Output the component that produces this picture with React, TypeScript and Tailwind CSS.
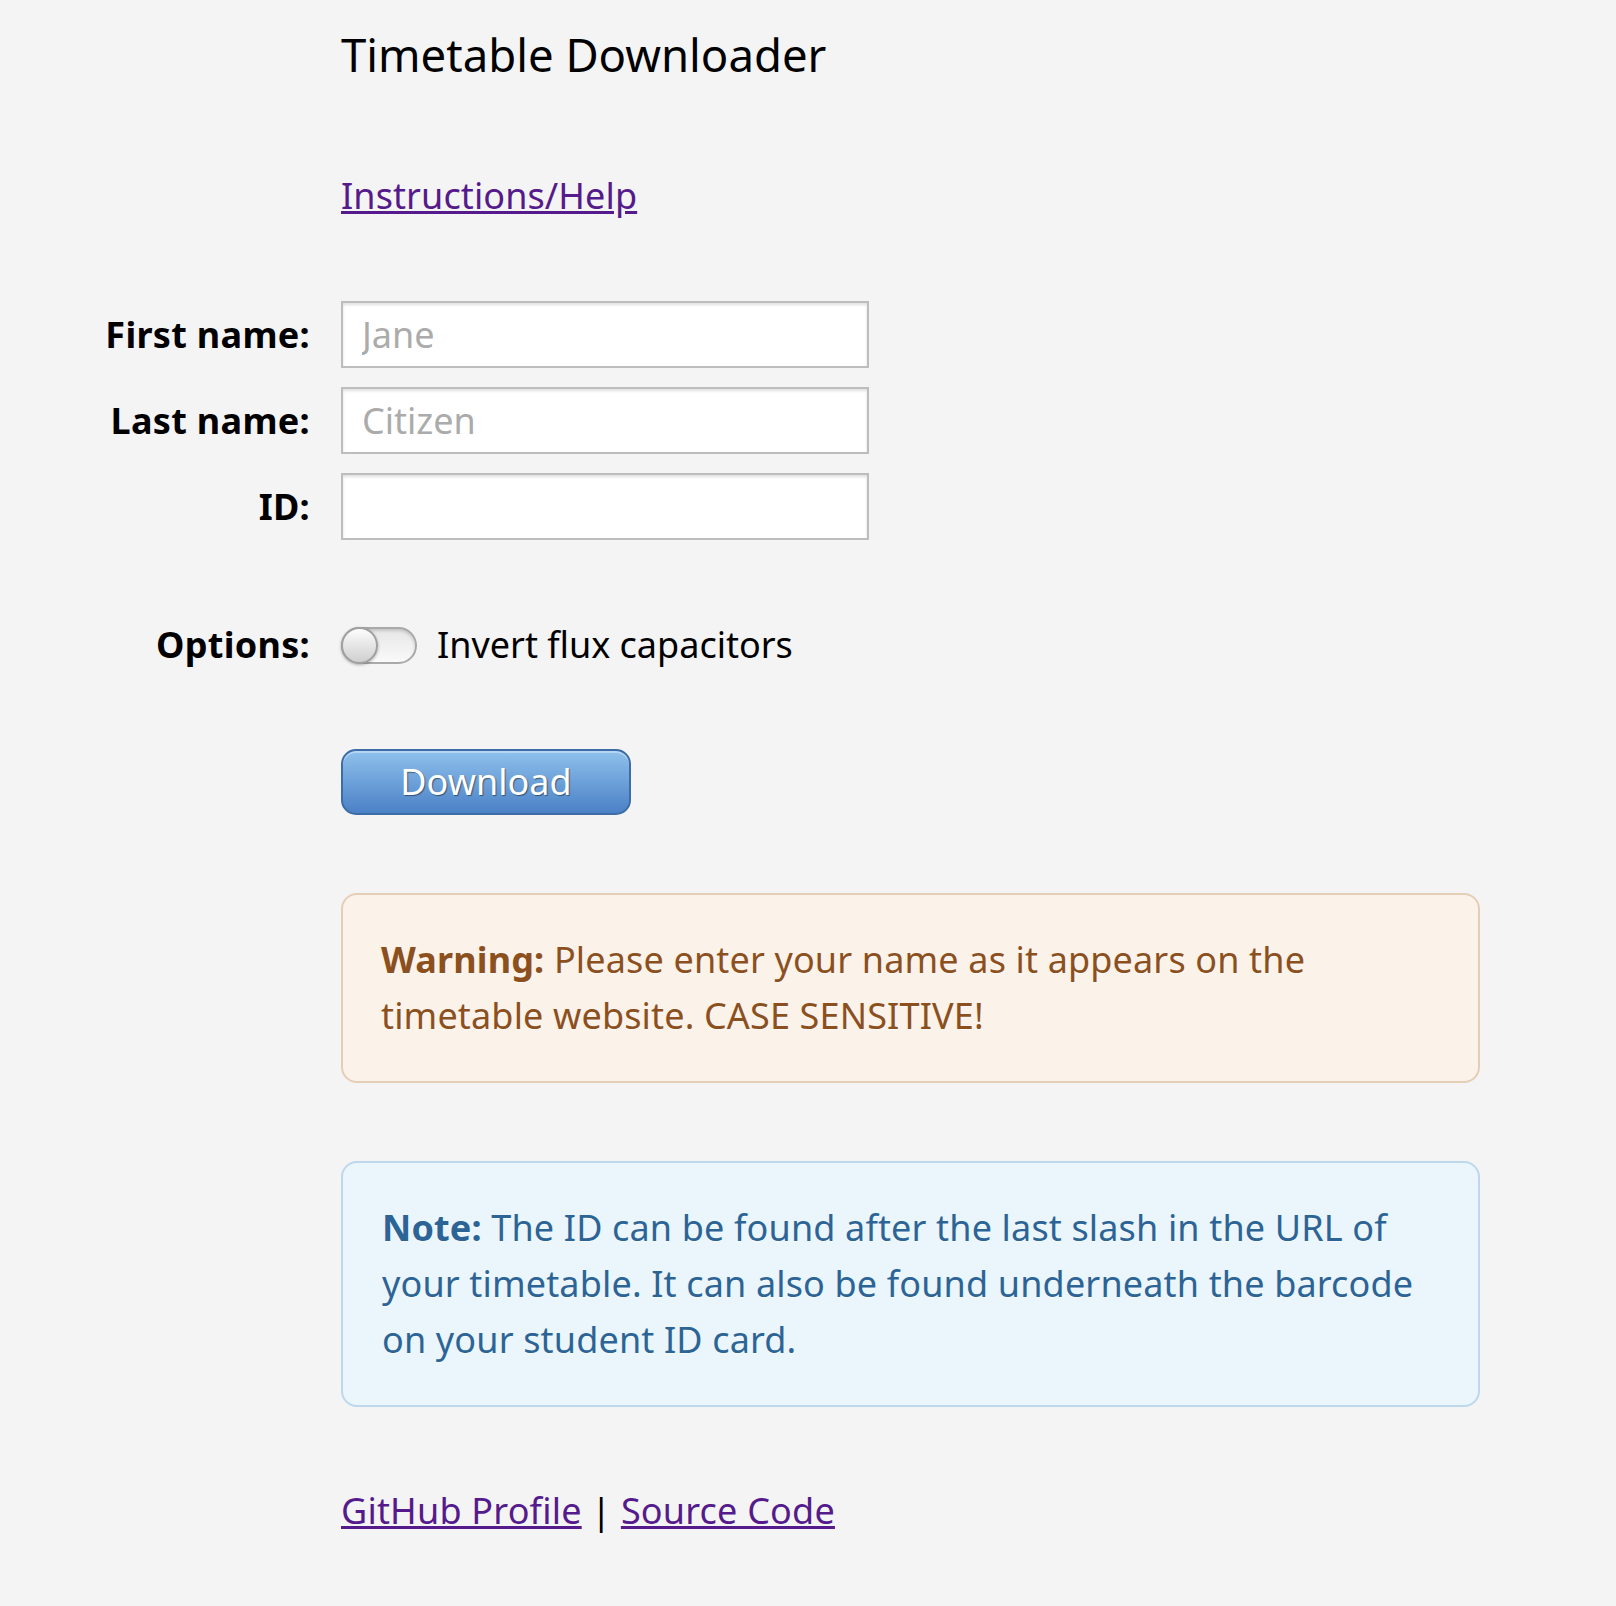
import React, { useState } from "react";

const fields = [
  { label: "First name:", placeholder: "Jane" },
  { label: "Last name:", placeholder: "Citizen" },
  { label: "ID:", placeholder: "" },
];

export default function App() {
  const [invert, setInvert] = useState(false);

  return (
    <div className="min-h-screen bg-[#f4f4f4] font-['Noto_Sans','Open_Sans',sans-serif] text-black pb-[60px]">
      <div className="grid grid-cols-[310px_1139px] gap-x-[31px]">
        {/* Header */}
        <h1 className="col-start-2 mt-[30px] text-[45.5px] leading-[48px] font-normal">
          Timetable Downloader
        </h1>
        <p className="col-start-2 mt-[90px] text-[36px] leading-[56px] tracking-[0.1px]">
          <a href="#" className="text-[#551a8b] underline">
            Instructions/Help
          </a>
        </p>

        {/* Fields */}
        <div className="col-span-2 mt-[77px] grid grid-cols-[310px_528px] gap-x-[31px] gap-y-[19px]">
          {fields.map((f) => (
            <React.Fragment key={f.label}>
              <label className="flex items-center justify-end text-[36px] leading-[56px] font-bold tracking-[0.3px]">
                {f.label}
              </label>
              <input
                type="text"
                placeholder={f.placeholder}
                className="h-[67px] w-[528px] bg-white border-2 border-[#bdbdbd] shadow-[inset_0_2px_3px_rgba(0,0,0,0.12)] px-[19px] text-[36px] outline-none placeholder:text-[#ababab]"
              />
            </React.Fragment>
          ))}
        </div>

        {/* Options */}
        <div className="mt-[77px] flex items-center justify-end text-[36px] leading-[56px] font-bold tracking-[0.3px]">
          Options:
        </div>
        <div className="mt-[77px] flex items-center gap-[20px] text-[36px] leading-[56px]">
          <button
            type="button"
            onClick={() => setInvert(!invert)}
            className={
              "relative w-[76px] h-[37px] rounded-full border-2 border-[#a9a9a9] shadow-[inset_0_2px_3px_rgba(0,0,0,0.15)] " +
              (invert
                ? "bg-gradient-to-b from-[#4d84c9] to-[#8cbde9]"
                : "bg-gradient-to-b from-[#e6e6e6] to-[#fafafa]")
            }
          >
            <span
              className={
                "absolute top-[-2px] w-[37px] h-[37px] rounded-full border-2 border-[#a0a0a0] bg-gradient-to-b from-[#fdfdfd] to-[#cfcfcf] shadow-[0_1px_3px_rgba(0,0,0,0.3)] " +
                (invert ? "right-[-2px]" : "left-[-2px]")
              }
            />
          </button>
          <span>Invert flux capacitors</span>
        </div>

        {/* Download */}
        <div className="col-start-2 mt-[76px]">
          <button
            type="button"
            className="w-[290px] h-[66px] rounded-[15px] border-2 border-[#3d6ca6] bg-gradient-to-b from-[#8fc1ec] to-[#4b81c6] shadow-[inset_0_2px_0_rgba(255,255,255,0.35)] text-white text-[36px] leading-[56px] [text-shadow:1px_1px_1px_rgba(0,0,0,0.45)]"
          >
            Download
          </button>
        </div>

        {/* Warning */}
        <div className="col-start-2 mt-[78px] rounded-[16px] border-2 border-[#e4cfb6] bg-[#fbf2e9] px-[38px] py-[37px] text-[36px] leading-[56px] tracking-[0.15px] text-[#8b501e] [text-shadow:0_1px_0_rgba(255,255,255,0.6)]">
          <strong className="font-bold">Warning:</strong> Please enter your name as it appears on the
          timetable website. CASE SENSITIVE!
        </div>

        {/* Note */}
        <div className="col-start-2 mt-[78px] rounded-[16px] border-2 border-[#bdd8ec] bg-[#eaf5fc] px-[39px] py-[37px] text-[36px] leading-[56px] tracking-[0.15px] text-[#2c6496] [text-shadow:0_1px_0_rgba(255,255,255,0.6)]">
          <strong className="font-bold">Note:</strong> The ID can be found after the last slash in the URL of your
          timetable. It can also be found underneath the barcode on your student ID card.
        </div>

        {/* Footer */}
        <p className="col-start-2 mt-[76px] text-[36px] leading-[56px] tracking-[0.2px]">
          <a href="#" className="text-[#551a8b] underline">
            GitHub Profile
          </a>{" "}
          |{" "}
          <a href="#" className="text-[#551a8b] underline">
            Source Code
          </a>
        </p>
      </div>
    </div>
  );
}
